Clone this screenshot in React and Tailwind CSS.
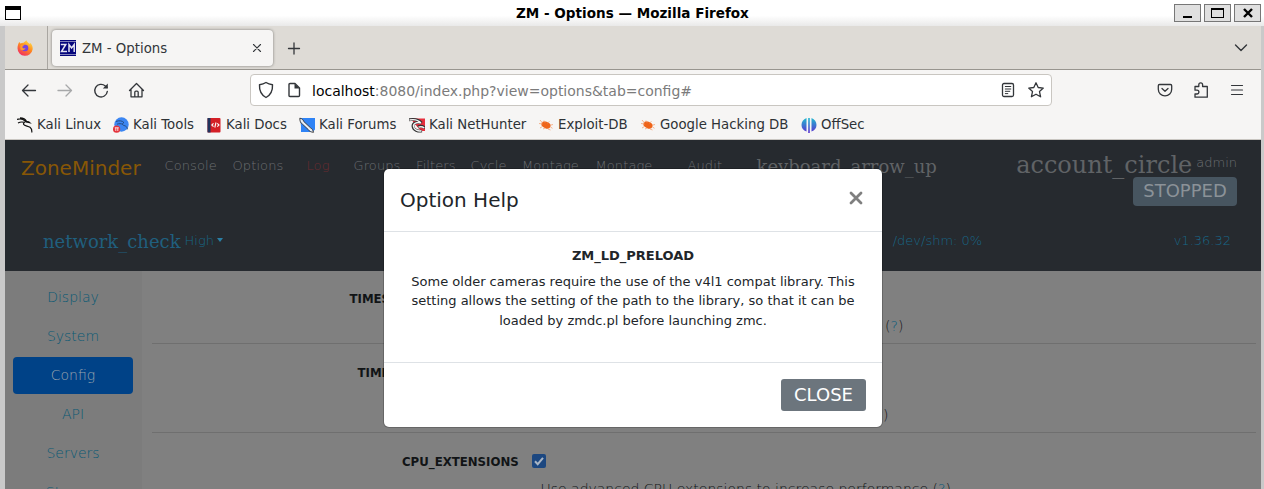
import React from 'react';

const ic = 'fill-none stroke-[#33363a] [stroke-linecap:round] [stroke-linejoin:round]';

function Svg({ children, className = '', w = 18, h = 18 }) {
  return (
    <svg width={w} height={h} viewBox={`0 0 ${w} ${h}`} className={`block shrink-0 ${className}`}>
      {children}
    </svg>
  );
}

function TitleBar() {
  return (
    <div className="flex h-[26px] shrink-0 items-start bg-linear-to-b from-white from-60% to-[#e9e9e9] pr-[3px] pl-[5px]">
      <div className="mt-[6px] h-[14px] w-[16px] border border-t-4 border-black bg-white" />
      <h1 className="mt-[4px] ml-[495px] text-[13.55px] leading-[18px] font-bold whitespace-nowrap text-black">ZM - Options — Mozilla Firefox</h1>
      <div className="mt-[4px] ml-auto flex gap-[3px]">
        <div className="flex h-[18px] w-[27px] justify-center border border-[#777] bg-[#e0e0e0]">
          <div className="mt-[11px] h-[2px] w-[9px] bg-black" />
        </div>
        <div className="flex h-[18px] w-[27px] items-center justify-center border border-[#777] bg-[#e0e0e0]">
          <div className="h-[10px] w-[13px] border border-t-2 border-black" />
        </div>
        <div className="flex h-[18px] w-[27px] items-center justify-center border border-[#777] bg-[#e0e0e0]">
          <Svg w={10} h={10}>
            <path d="M1 1l8 8M9 1l-8 8" className="stroke-black" strokeWidth="2.4" />
          </Svg>
        </div>
      </div>
    </div>
  );
}

function FirefoxIcon() {
  return (
    <Svg w={16} h={16}>
      <defs>
        <linearGradient id="fx" x1="0.8" y1="0" x2="0.2" y2="1">
          <stop offset="0" stopColor="#ffe14a" />
          <stop offset="0.45" stopColor="#ff8a1e" />
          <stop offset="1" stopColor="#f0246b" />
        </linearGradient>
      </defs>
      <path d="M1.2 4.2C1.6 3 2 2.4 2.6 2c.1.7.4 1.2.9 1.5C4.6 2.9 5.500 2.7 6.500 2.8 7.500 2 8.700 1 9.500.3c.3 1.500 1.500 2.200 2.500 3 .5.3.8.7 1 1 .1-.5.1-1-.1-1.500 2.100 1.500 3.100 4 2.700 6.700A7.600 7.600 0 0 1 .5 8.300c0-1.500.2-3 .7-4.100z" fill="url(#fx)" />
      <circle cx="8" cy="8" r="3.300" fill="#7543e3" />
      <path d="M3.500 5.200c1.500-.6 3-.2 4 .9-1.200.1-2 .4-2.200 1 .2 1.700 2.500 1.600 3.200.7-.3 2.300-3.300 3.200-5.200 1.400z" fill="#ff9a2e" />
    </Svg>
  );
}

function TabBar() {
  return (
    <div className="flex h-[44px] shrink-0 items-start border-b border-[#98958f] bg-[#dedbd6]">
      <div className="flex h-[43px] w-[43px] items-center justify-center border-r border-[#a9a6a1] pr-[3px]">
        <FirefoxIcon />
      </div>
      <div className="mt-[4px] ml-[4px] flex h-[36px] w-[221px] items-center rounded-[4px] bg-[#f6f5f4] pl-[8px] shadow-[0_0_3px_rgba(0,0,0,0.45)]">
        <Svg w={16} h={16}>
          <rect width="16" height="16" fill="#06067c" />
          <path d="M0 1.500h16M0 14.500h16" stroke="#b9b9d8" strokeWidth="0.700" />
          <path d="M0.800 4.500h5L1.500 11.500h5.500M9 12V4.500l2.600 3.500 2.600-3.500V12" fill="none" stroke="#e4e4f2" strokeWidth="1.500" />
        </Svg>
        <span className="mt-[2px] ml-[6px] w-[162px] text-[13.3px] leading-[18px] text-[#33363a]">ZM - Options</span>
        <Svg w={18} h={18} className="ml-[4px]">
          <path d="M5.500 5.500l7 7M12.500 5.500l-7 7" className={ic} strokeWidth="1.100" />
        </Svg>
      </div>
      <Svg w={14} h={14} className="mt-[16px] ml-[14px]">
        <path d="M1.500 6.500h11M7 1v11" className={ic} strokeWidth="1.300" />
      </Svg>
      <Svg w={16} h={12} className="mt-[16px] mr-[12px] ml-auto">
        <path d="M2.500 3L8 8.500 13.500 3" className={ic} strokeWidth="1.400" />
      </Svg>
    </div>
  );
}

function Toolbar() {
  return (
    <div className="flex h-[40px] shrink-0 items-center bg-[#f6f5f4] pl-[15px]">
      <Svg><path d="M2.500 9.500H15.500M8 4L2.500 9.500 8 15" className={ic} strokeWidth="1.300" /></Svg>
      <Svg className="ml-[18px] opacity-40"><path d="M2 9.500h13.500M10 4L15.500 9.500 10 15" className={ic} strokeWidth="1.300" /></Svg>
      <Svg className="ml-[18px]">
        <path d="M15.300 10.500A6.300 6.300 0 1 1 13.300 5l1.700 1.500" className={ic} strokeWidth="1.400" />
        <path d="M15.800 2.500v5h-5z" fill="#33363a" />
      </Svg>
      <Svg className="ml-[18px]">
        <path d="M1.500 9.500L8.500 2.500l7 7M3 8.500v7.300h11V8.500M6.800 15.500v-4.200c0-.7.500-1.200 1.200-1.200h1c.7 0 1.200.5 1.200 1.200v4.200" className={ic} strokeWidth="1.300" />
      </Svg>
      <div className="ml-[104px] flex h-[32px] w-[802px] items-center rounded-[4px] border border-[#c9c6c1] bg-white pl-[6px]">
        <Svg><path d="M9 1.500c2 1.300 4 1.900 6.500 2.200.3 5.300-1.500 10-6.500 12.800C4 13.700 2.200 9 2.500 3.700 5 3.400 7 2.800 9 1.500z" className={ic} strokeWidth="1.400" /></Svg>
        <Svg className="ml-[10px]">
          <path d="M5 2.500h5l4.500 4.500v7.500c0 .6-.4 1-1 1H5c-.6 0-1-.4-1-1v-11c0-.6.4-1 1-1z" className={ic} strokeWidth="1.400" />
          <path d="M9.500 2.500v5h5z" fill="#33363a" />
        </Svg>
        <span className="mt-[2px] ml-[9px] text-[13.99px] leading-[18px] text-[#7b7b7b]"><span className="text-black">localhost</span>:8080/index.php?view=options&amp;tab=config#</span>
        <Svg className="mr-[10px] ml-auto">
          <rect x="3.500" y="2.500" width="11" height="13" rx="1.500" className={ic} strokeWidth="1.300" />
          <path d="M6.300 5.500h5.500M6.300 8h5.500M6.300 10.300h4.500M6.300 12.600h2.500" className={ic} strokeWidth="1" />
        </Svg>
        <Svg className="mr-[6px]">
          <path d="M9 1.800l2.200 4.700 5.100.6-3.800 3.500 1.100 5.200L9 13.200l-4.600 2.600 1.100-5.200L1.700 7.100l5.100-.6z" className={ic} strokeWidth="1.300" />
        </Svg>
      </div>
      <Svg className="ml-[104px]">
        <path d="M3.500 3.500h11c.7 0 1.200.5 1.200 1.200v3.500a6.700 6.700 0 0 1-13.400 0V4.700c0-.7.500-1.200 1.200-1.200zM6 7.500l3 2.800 3-2.800" className={ic} strokeWidth="1.300" />
      </Svg>
      <Svg className="ml-[18px]">
        <path d="M3 5.500h3.800v-1.700a1.900 1.900 0 0 1 3.800 0v1.700h4.700v10.700H3v-3.200h2a1.900 1.900 0 0 0 0-3.800H3z" className={ic} strokeWidth="1.300" />
      </Svg>
      <Svg className="ml-[18px]">
        <path d="M3.500 4.500h11M3.500 9h11M3.500 13.500h11" className={ic} strokeWidth="1.200" />
      </Svg>
    </div>
  );
}

const bookmarkIcons = {
  kali: (
    <Svg w={16} h={16}>
      <path d="M0 2.500c3-1.200 6-.6 8.500 1.800M1 6c2.500-1.400 4.500-1.200 6.500-.6M3 .8C6 .8 8.500 2 9.500 4.500c-2 .3-3.500 1.500-2.800 3s4.300 1.500 6.300 2.800c1.500 1.200 2 3 1.800 5.200" fill="none" stroke="#111" strokeWidth="1.200" />
      <path d="M8.500 3.800l3.500.4 2.800 2.600-3.500-.9-2.500-.4z" fill="#111" />
    </Svg>
  ),
  tools: (
    <Svg w={16} h={16}>
      <circle cx="8.500" cy="7.500" r="7.200" fill="#3c86f2" />
      <path d="M3 4.500c3-1.300 6.500-.8 8 1.200M11 5.500c-2 .8-2 2.500 0 3s3.300 1.500 3.500 3.800M4 7.200c2-.8 4-.6 5.500 0" fill="none" stroke="#23477c" strokeWidth="0.900" />
      <circle cx="3.600" cy="12.200" r="3.600" fill="#e5343c" />
      <path d="M1.800 10.800h4M2.800 10.800v3.200M4.800 10.800v3.200" stroke="#fff" strokeWidth="0.800" />
    </Svg>
  ),
  docs: (
    <Svg w={16} h={16}>
      <rect x="1.500" y="1" width="13" height="14.500" rx="1" fill="#d41f26" />
      <rect x="1.500" y="1" width="3" height="14.500" fill="#20335c" />
      <path d="M7.500 6.300L5.800 8l1.700 1.700M11.300 6.300L13 8l-1.700 1.700M10 5.500L8.800 10.500" fill="none" stroke="#fff" strokeWidth="1.100" />
    </Svg>
  ),
  forums: (
    <Svg w={16} h={16}>
      <path d="M1 1h15v11.500l-2.500 2.500H2V9z" fill="#2f83f5" />
      <path d="M.8 1.200c2.200.3 3.400 1.500 3.900 3.200l6.800 6.400c2 1 2.500 2.700 3 4.500-2.500-.2-4.300-1-5.200-2.700L3.300 7C1.500 6 .8 4 .8 1.200z" fill="#e7eef6" stroke="#333" strokeWidth="0.900" />
    </Svg>
  ),
  nethunter: (
    <Svg w={16} h={16}>
      <path d="M3 1.500h13v12.500h-4L4 5z" fill="#e62f3d" />
      <path d="M0 2.800c5-1 10 .2 12.500 3.200M12 5.800C8 4.500 3.500 6 4 9.500s5 5.300 9 4.500M9 10c2-1.200 4.500-1 7 1" fill="none" stroke="#333" strokeWidth="2.800" />
      <path d="M.5 3c5-1 9 .3 11.500 3M12 6C8 4.700 4 6.200 4.500 9.500s4.500 5 8 4.300M9.500 10.200c2-.8 4-.6 5.800.8" fill="none" stroke="#f4f4f4" strokeWidth="1.400" />
    </Svg>
  ),
  bug: (
    <Svg w={16} h={16}>
      <ellipse cx="8" cy="8" rx="4.800" ry="3.200" transform="rotate(25 8 8)" fill="#ef6419" />
      <path d="M4.500 6L2 3M1 6.500l3.500.5M4.500 9.500L2 11M7 5.500L6 3.500M9.500 6l2-1.500M12 8.300l3-.8M12.500 10l2 1.300M10 12l2.500 1M7 11L5 12" fill="none" stroke="#f3a273" strokeWidth="0.800" />
    </Svg>
  ),
  offsec: (
    <Svg w={16} h={16}>
      <defs>
        <linearGradient id="os" x1="0" y1="0" x2="0" y2="1">
          <stop offset="0" stopColor="#20b8d0" />
          <stop offset="1" stopColor="#5b2fd0" />
        </linearGradient>
      </defs>
      <path d="M5.500 1v13.500C2.300 13.500.5 11 .5 8S2.300 2.200 5.500 1zM10.500 1v13.500c3.200-1 5-3.500 5-6.500S13.700 2.200 10.500 1zM7.200 1h1.600v15H7.200z" fill="url(#os)" />
    </Svg>
  ),
};

const bookmarks = [
  ['kali', 'Kali Linux', 'w-[96px]'],
  ['tools', 'Kali Tools', 'w-[93px]'],
  ['docs', 'Kali Docs', 'w-[93px]'],
  ['forums', 'Kali Forums', 'w-[110px]'],
  ['nethunter', 'Kali NetHunter', 'w-[129px]'],
  ['bug', 'Exploit-DB', 'w-[102px]'],
  ['bug', 'Google Hacking DB', 'w-[161px]'],
  ['offsec', 'OffSec', 'w-[80px]'],
];

function Bookmarks() {
  return (
    <div className="flex h-[30px] shrink-0 items-center border-b border-[#c9c6c1] bg-[#f6f5f4] pl-[12px]">
      {bookmarks.map(([icon, label, width]) => (
        <div key={label} className={`flex shrink-0 items-center gap-[4px] ${width}`}>
          {bookmarkIcons[icon]}
          <span className="text-[13.3px] leading-[18px] whitespace-nowrap text-[#2e3236]">{label}</span>
        </div>
      ))}
    </div>
  );
}

const menu = [
  ['Console', 'w-[68px]'],
  ['Options', 'w-[74px]'],
  ['Log', 'w-[47px] text-[#6a2a2f]'],
  ['Groups', 'w-[62.5px]'],
  ['Filters', 'w-[54.5px]'],
  ['Cycle', 'w-[51.5px]'],
  ['Montage', 'w-[73.5px]'],
  ['Montage', 'w-[92px]'],
  ['Audit', 'w-[69px]'],
];

function ZmHeader() {
  return (
    <header className="flex h-[131px] shrink-0 flex-col bg-[#262a2f] font-extralight">
      <div className="flex h-[86px] items-start pl-[16px]">
        <div className="mt-[13px] w-[143.5px] text-[20px] leading-[30px] font-normal text-[#885706]">ZoneMinder</div>
        <nav className="mt-[16px] flex text-[13px] leading-[20px] text-[#6c6f72]">
          {menu.map(([label, cls], i) => (
            <span key={i} className={`shrink-0 tracking-[0.1px] ${cls}`}>{label}</span>
          ))}
        </nav>
        <div className="mt-[14px] font-['DejaVu_Serif'] text-[18px] leading-[26px] font-normal text-[#606366]">keyboard_arrow_up</div>
        <div className="mt-[9px] mr-[24px] ml-auto flex flex-col items-end">
          <div className="flex h-[28px] items-start text-[13px] text-[#6c6f72]">
            <span className="mr-[4px] font-['DejaVu_Serif'] text-[24px] leading-[32px] font-normal text-[#606366]">account_circle</span>
            <span className="mt-[4px] leading-[20px]">admin</span>
          </div>
          <div className="flex h-[29px] w-[104px] items-center justify-center rounded-[4px] bg-[#475560] pb-[3px] text-[18px] font-normal text-[#8b9298]">STOPPED</div>
        </div>
      </div>
      <div className="flex items-start pl-[38px] text-[13px] leading-[20px] text-[#176788]">
        <span className="mt-[3px] w-[141.5px] font-['DejaVu_Serif'] text-[18px] leading-[26px] font-normal text-[#205f7e]">network_check</span>
        <span className="mt-[5px]">High</span>
        <span className="mt-[12px] ml-[3px] border-x-[3.500px] border-t-[4px] border-x-transparent border-t-[#2a7fa5]" />
        <span className="mt-[5px] ml-auto w-[281px]">/dev/shm: 0%</span>
        <span className="mt-[5px] mr-[30px]">v1.36.32</span>
      </div>
    </header>
  );
}

const side = ['Display', 'System', 'Config', 'API', 'Servers', 'Storage'];

function Side() {
  return (
    <aside className="flex w-[137px] shrink-0 flex-col gap-[2px] bg-[#7c7c7c] pt-[8px] pl-[8px]">
      {side.map((s) => (
        <div
          key={s}
          className={
            'flex h-[37px] w-[120px] shrink-0 items-center justify-center rounded-[4px] text-[14px] font-extralight ' +
            (s === 'Config' ? 'bg-[#004287] text-[#9aa4ae]' : 'text-[#0b5a74]')
          }
        >
          {s}
        </div>
      ))}
    </aside>
  );
}

function Help() {
  return <span>(<span className="text-[#08587a]">?</span>)</span>;
}

function Options() {
  return (
    <main className="flex flex-1 flex-col pr-[5px] pl-[10px] text-[11.75px] text-[#111416]">
      <section className="flex h-[73px] shrink-0 border-b border-[#6f6f6f]">
        <div className="mt-[18px] w-[366px] pl-[197.5px] leading-[20px] font-bold">TIMESTAMP_ON_CAPTURE</div>
        <div className="mt-[45px] pl-[367px] text-[14px] leading-[20px] font-extralight"><Help /></div>
      </section>
      <section className="flex h-[89px] shrink-0 border-b border-[#6f6f6f]">
        <div className="mt-[19px] w-[366px] pl-[205.5px] leading-[20px] font-bold">TIMESTAMP_CODE</div>
        <div className="mt-[61px] pl-[352px] text-[14px] leading-[20px] font-extralight"><Help /></div>
      </section>
      <section className="flex shrink-0 flex-col">
        <div className="mt-[18px] flex h-[20px] items-center pl-[250px]">
          <span className="mt-[2px] w-[130px] leading-[20px] font-bold">CPU_EXTENSIONS</span>
          <Svg w={14} h={14}>
            <rect width="14" height="14" rx="2" fill="#1c4780" />
            <path d="M3 7.300l2.700 2.900L11 3.800" fill="none" stroke="#a9b5c4" strokeWidth="2" />
          </Svg>
        </div>
        <div className="mt-[8px] pl-[388.5px] text-[13.99px] leading-[20px] font-extralight">Use advanced CPU extensions to increase performance <Help /></div>
      </section>
    </main>
  );
}

function Modal() {
  return (
    <div className="absolute top-[29px] left-[379px] flex h-[258px] w-[498px] flex-col rounded-[5px] bg-white text-[#212529] shadow-[0_0_0_1px_rgba(0,0,0,0.2)]">
      <div className="flex h-[63px] shrink-0 items-center justify-between border-b border-[#dee2e6] pr-[18px] pl-[16px]">
        <h2 className="text-[20px] leading-[30px]">Option Help</h2>
        <Svg w={16} h={16} className="mb-[4px]">
          <path d="M3 3l10 10M13 3L3 13" className="stroke-[#7f7f7f]" strokeWidth="2.800" strokeLinecap="round" />
        </Svg>
      </div>
      <div className="flex h-[131px] shrink-0 flex-col items-center border-b border-[#dee2e6] pt-[14px] text-[13px] leading-[19.5px]">
        <div className="font-bold">ZM_LD_PRELOAD</div>
        <p className="mt-[6px] text-center">
          Some older cameras require the use of the v4l1 compat library. This<br />
          setting allows the setting of the path to the library, so that it can be<br />
          loaded by zmdc.pl before launching zmc.
        </p>
      </div>
      <div className="flex flex-1 items-center justify-end pr-[16px]">
        <button className="h-[32px] w-[85px] rounded-[3px] bg-[#6c757d] text-[18px] leading-[32px] text-white">CLOSE</button>
      </div>
    </div>
  );
}

export default function App() {
  return (
    <div className="flex h-[489px] w-[1264px] flex-col overflow-hidden bg-[#c9c9c9] font-['DejaVu_Sans',sans-serif]">
      <TitleBar />
      <div className="mr-[3px] ml-[5px] flex min-h-0 flex-1 flex-col">
        <TabBar />
        <Toolbar />
        <Bookmarks />
        <div className="relative flex min-h-0 flex-1 flex-col overflow-hidden bg-[#808080]">
          <ZmHeader />
          <div className="flex min-h-0 flex-1 overflow-hidden">
            <Side />
            <Options />
          </div>
          <Modal />
        </div>
      </div>
    </div>
  );
}
